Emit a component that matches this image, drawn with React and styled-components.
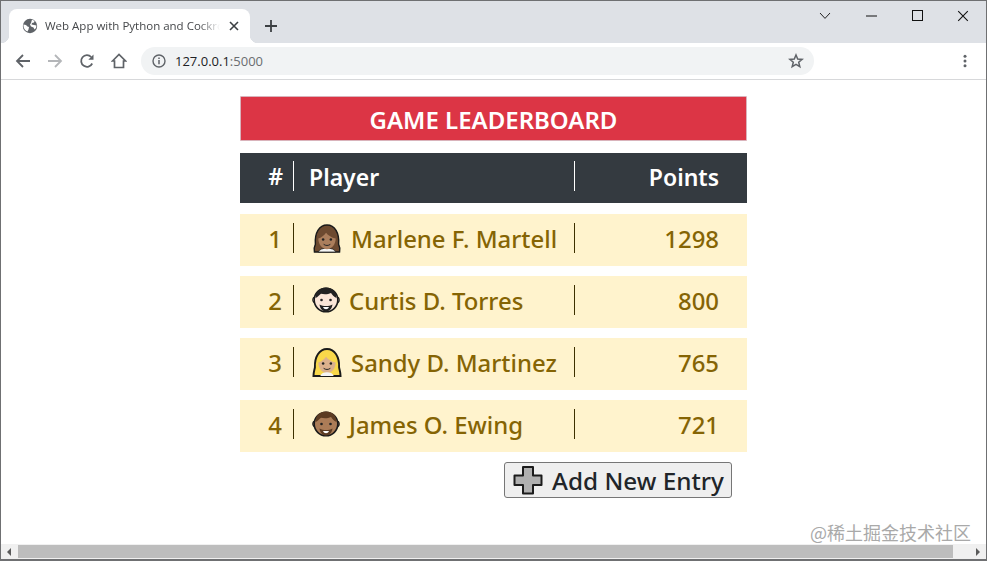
import React from "react"
import styled, { createGlobalStyle } from "styled-components"

const GlobalStyle = createGlobalStyle`
  html, body {
    margin: 0;
    padding: 0;
    height: 100%;
    overflow: hidden;
    background: #fff;
  }
  #root {
    height: 100%;
  }
`

const players = [
  { rank: 1, name: "Marlene F. Martell", points: 1298, face: "woman" },
  { rank: 2, name: "Curtis D. Torres", points: 800, face: "man" },
  { rank: 3, name: "Sandy D. Martinez", points: 765, face: "blonde" },
  { rank: 4, name: "James O. Ewing", points: 721, face: "beard" },
]

const Globe = () => (
  <svg width="16" height="16" viewBox="0 0 16 16">
    <circle cx="8" cy="8" r="7.2" fill="#5f6368" />
    <path d="M1.500 6.500l2.500.5 1.500 1.500 1.500.5-.5 2.500-1 2C3.500 13 1.500 10.500 1.500 8zM10 1.500l2.500 1.500-.5 1.500-2 .5-.5 1.500 2.500.5 2.500.5-.5 2.500-1.500 1.500-1-2-2.500-1-1-2 1-1.500z" fill="#fff" />
  </svg>
)

const Arrow = ({ color, flip }) => (
  <svg width="16" height="16" viewBox="0 0 16 16" style={flip ? { transform: "scaleX(-1)" } : undefined}>
    <path d="M15 8H2M8 2 2 8l6 6" fill="none" stroke={color} strokeWidth="1.8" />
  </svg>
)

const Reload = () => (
  <svg width="16" height="16" viewBox="0 0 16 16">
    <path d="M13.200 10.500A5.800 5.800 0 1 1 12.200 4" fill="none" stroke="#5f6368" strokeWidth="1.800" />
    <path d="M14.500 1.500v5.200H9.300z" fill="#5f6368" />
  </svg>
)

const HomeIcon = () => (
  <svg width="16" height="16" viewBox="0 0 16 16">
    <path d="M1.500 8 8 1.500 14.500 8H12.500V14.500H3.500V8z" fill="none" stroke="#5f6368" strokeWidth="1.700" />
  </svg>
)

const InfoIcon = () => (
  <svg width="14" height="14" viewBox="0 0 14 14">
    <circle cx="7" cy="7" r="6" fill="none" stroke="#5f6368" strokeWidth="1.400" />
    <path d="M7 6v4.200M7 3.600v1.400" stroke="#5f6368" strokeWidth="1.500" />
  </svg>
)

const StarIcon = () => (
  <svg width="16" height="16" viewBox="0 0 16 16">
    <path d="M8 2l1.700 4.100 4.400.3-3.400 2.900 1.100 4.300L8 11.300l-3.800 2.300 1.100-4.300-3.400-2.900 4.400-.3z" fill="none" stroke="#5f6368" strokeWidth="1.500" />
  </svg>
)

const Dots = () => (
  <svg width="4" height="14" viewBox="0 0 4 14">
    <circle cx="2" cy="2.200" r="1.500" fill="#5f6368" />
    <circle cx="2" cy="7" r="1.500" fill="#5f6368" />
    <circle cx="2" cy="11.800" r="1.500" fill="#5f6368" />
  </svg>
)

const Cross = ({ size, color, width }) => (
  <svg width={size} height={size} viewBox="0 0 10 10">
    <path d="M1 1l8 8M9 1 1 9" stroke={color} strokeWidth={width} fill="none" />
  </svg>
)

const Plus = () => (
  <svg width="12" height="12" viewBox="0 0 12 12">
    <path d="M6 0v12M0 6h12" stroke="#3c4043" strokeWidth="1.800" />
  </svg>
)

const Chevron = () => (
  <svg width="12" height="8" viewBox="0 0 12 8">
    <path d="M1 1l5 5.400L11 1" stroke="#222" strokeWidth="1" fill="none" />
  </svg>
)

const Minimize = () => (
  <svg width="11" height="2" viewBox="0 0 11 2">
    <path d="M0 1h11" stroke="#111" strokeWidth="1" />
  </svg>
)

const Maximize = () => (
  <svg width="11" height="11" viewBox="0 0 11 11">
    <rect x=".5" y=".5" width="10" height="10" stroke="#111" fill="none" />
  </svg>
)

const AddIcon = () => (
  <svg width="30" height="30" viewBox="0 0 30 30">
    <path d="M10 2h10v8.500h8.500v9.500H20v8.500H10V20H1.500v-9.500H10z" fill="#b0b0b0" stroke="#1c1c1c" strokeWidth="2" strokeLinejoin="round" />
  </svg>
)

const Face = ({ type }) => {
  const outline = "#1a1a1a"
  if (type === "woman") {
    return (
      <svg width="30" height="29" viewBox="1.500 0 29 30">
        <path d="M3 29c-1-4 0-6 1-8C3 9 8 1 16 1s13 8 12 20c1 2 2 4 1 8z" fill="#6d4a30" stroke={outline} strokeWidth="1.500" />
        <path d="M7 29c1-3 5-4 9-4s8 1 9 4z" fill="#f5f5f5" stroke={outline} strokeWidth=".8" />
        <path d="M7 15c3-1 6-3 8-6 2 3 6 5 10 6 0 6-4 11-9 11S7 21 7 15z" fill="#ab7e5c" />
        <circle cx="12" cy="16" r="1.300" fill="#222" />
        <circle cx="20" cy="16" r="1.300" fill="#222" />
        <path d="M12.500 21c2 1.600 5 1.600 7 0" stroke="#222" strokeWidth="1" fill="none" />
      </svg>
    )
  }
  if (type === "blonde") {
    return (
      <svg width="30" height="29" viewBox="1 0 30 30">
        <path d="M2 29c0-4 1-6 1.500-9C3 9 8 1 16 1s13 8 12.500 19c.5 3 1.500 5 1.500 9z" fill="#f9d84a" stroke={outline} strokeWidth="2" />
        <path d="M7 15c3-1 6-3 8-6 2 3 6 5 10 6 0 6-4 11-9 11S7 21 7 15z" fill="#dbb18d" />
        <path d="M9 29c1-3 4-4 7-4s6 1 7 4z" fill="#f5f5f5" />
        <circle cx="12" cy="16" r="1.300" fill="#222" />
        <circle cx="20" cy="16" r="1.300" fill="#222" />
        <path d="M12.500 21c2 1.600 5 1.600 7 0" stroke="#222" strokeWidth="1" fill="none" />
      </svg>
    )
  }
  const skin = type === "man" ? "#fbe6d8" : "#ab7c57"
  const hair = type === "man" ? "#222" : "#5c3b22"
  return (
    <svg width="28" height="28" viewBox="0 0 28 28">
      <circle cx="3.600" cy="14" r="2.800" fill={skin} stroke={outline} strokeWidth="1.200" />
      <circle cx="24.400" cy="14" r="2.800" fill={skin} stroke={outline} strokeWidth="1.200" />
      <circle cx="14" cy="14" r="11.800" fill={skin} stroke={outline} strokeWidth="1.600" />
      <path d="M3.500 12C3.500 5 8 1.500 14 1.500S24.500 5 24.500 12c-2.500-1-4.500-3.500-5.500-5-3 1.500-7 1.500-10 .8C7.500 9 5.500 11.500 3.500 12z" fill={hair} />
      <path d="M7.500 18.500c2 1.500 4 1.500 6.500 1.500s4.500 0 6.500-1.500c-.5 4.500-3.500 7-6.500 7s-6-2.500-6.500-7z" fill={hair} />
      <path d="M11 21h6c-.6 1.600-1.800 2.200-3 2.200s-2.400-.6-3-2.200z" fill="#fff" />
      <circle cx="9.500" cy="14" r="1.300" fill="#222" />
      <circle cx="18.500" cy="14" r="1.300" fill="#222" />
    </svg>
  )
}

const App = () => {
  return (
    <>
      <GlobalStyle />
      <Window>
        <TabStrip>
          <Tab>
            <Globe />
            <TabTitle>Web App with Python and CockroachDB</TabTitle>
            <TabClose>
              <Cross size={10} color="#3c4043" width={1.6} />
            </TabClose>
          </Tab>
          <NewTab>
            <Plus />
          </NewTab>
          <WindowControls>
            <ControlButton>
              <Chevron />
            </ControlButton>
            <ControlButton>
              <Minimize />
            </ControlButton>
            <ControlButton>
              <Maximize />
            </ControlButton>
            <ControlButton>
              <Cross size={12} color="#111" width={0.9} />
            </ControlButton>
          </WindowControls>
        </TabStrip>
        <Toolbar>
          <NavButton>
            <Arrow color="#5f6368" />
          </NavButton>
          <NavButton>
            <Arrow color="#b4b6b9" flip />
          </NavButton>
          <NavButton>
            <Reload />
          </NavButton>
          <NavButton>
            <HomeIcon />
          </NavButton>
          <AddressBar>
            <InfoIcon />
            <Url>
              127.0.0.1<UrlPort>:5000</UrlPort>
            </Url>
            <StarSlot>
              <StarIcon />
            </StarSlot>
          </AddressBar>
          <MenuSlot>
            <Dots />
          </MenuSlot>
        </Toolbar>
        <Page>
          <Board>
            <Heading>GAME LEADERBOARD</Heading>
            <HeaderRow>
              <RankCell $pad={10}>#</RankCell>
              <PlayerCell $divider="#fff" $pad={15}>
                <HeadName>Player</HeadName>
              </PlayerCell>
              <PointsCell $divider="#fff">Points</PointsCell>
            </HeaderRow>
            {players.map((p) => (
              <Row key={p.rank}>
                <RankCell $pad={11}>{p.rank}</RankCell>
                <PlayerCell $divider="#3d3000" $pad={18}>
                  <FaceSlot>
                    <Face type={p.face} />
                  </FaceSlot>
                  <Name>{p.name}</Name>
                </PlayerCell>
                <PointsCell $divider="#3d3000">{p.points}</PointsCell>
              </Row>
            ))}
            <ButtonRow>
              <AddButton>
                <AddIcon />
                Add New Entry
              </AddButton>
            </ButtonRow>
          </Board>
          <Watermark>@稀土掘金技术社区</Watermark>
        </Page>
        <ScrollBar>
          <ScrollArrow $left />
          <ScrollThumb />
          <ScrollArrow />
        </ScrollBar>
      </Window>
    </>
  )
}

export default App

const Window = styled.div`
  box-sizing: border-box;
  width: 987px;
  height: 561px;
  display: flex;
  flex-direction: column;
  border: 1px solid #6f7072;
  border-bottom-width: 2px;
  overflow: hidden;
  font-family: "Noto Sans", "Open Sans", sans-serif;
`

const TabStrip = styled.div`
  flex: 0 0 42px;
  display: flex;
  align-items: flex-end;
  background: #dee1e6;
  padding-left: 8px;
`

const Tab = styled.div`
  position: relative;
  box-sizing: border-box;
  width: 241px;
  height: 34px;
  display: flex;
  align-items: center;
  padding: 0 11px 0 13px;
  background: #fff;
  border-radius: 8px 8px 0 0;

  &::before,
  &::after {
    content: "";
    position: absolute;
    bottom: 0;
    width: 8px;
    height: 8px;
  }
  &::before {
    left: -8px;
    background: radial-gradient(circle at 0 0, #dee1e6 8px, #fff 8.5px);
  }
  &::after {
    right: -8px;
    background: radial-gradient(circle at 100% 0, #dee1e6 8px, #fff 8.5px);
  }
`

const TabTitle = styled.span`
  flex: 1;
  margin: -2px 0 0 7px;
  font-family: "Open Sans", "Noto Sans", sans-serif;
  font-size: 11.5px;
  color: #45474a;
  white-space: nowrap;
  overflow: hidden;
  -webkit-mask-image: linear-gradient(to right, #000 88%, transparent 100%);
  mask-image: linear-gradient(to right, #000 88%, transparent 100%);
`

const TabClose = styled.span`
  display: flex;
  margin-left: 9px;
`

const NewTab = styled.span`
  display: flex;
  align-self: center;
  margin: 8px 0 0 15px;
`

const WindowControls = styled.div`
  display: flex;
  align-self: flex-start;
  margin-left: auto;
`

const ControlButton = styled.span`
  width: 46px;
  height: 29px;
  display: flex;
  align-items: center;
  justify-content: center;
`

const Toolbar = styled.div`
  box-sizing: border-box;
  flex: 0 0 37px;
  display: flex;
  align-items: center;
  background: #fff;
  border-bottom: 1px solid #d7d8da;
  padding: 0 0 1px 6px;
`

const NavButton = styled.span`
  width: 32px;
  display: flex;
  justify-content: center;
`

const AddressBar = styled.div`
  box-sizing: border-box;
  width: 673px;
  height: 28px;
  margin-left: 6px;
  display: flex;
  align-items: center;
  padding: 0 10px 0 11px;
  background: #f1f3f4;
  border-radius: 14px;
`

const Url = styled.span`
  margin-left: 9px;
  font-family: "Open Sans", "Noto Sans", sans-serif;
  font-size: 13px;
  color: #202124;
`

const UrlPort = styled.span`
  color: #6a6d70;
`

const StarSlot = styled.span`
  display: flex;
  margin-left: auto;
`

const MenuSlot = styled.span`
  display: flex;
  margin-left: 149px;
`

const Page = styled.main`
  position: relative;
  flex: 1;
  display: flex;
  justify-content: center;
  background: #fff;
`

const Board = styled.div`
  width: 507px;
  margin: 16px 0 0 0;
  display: flex;
  flex-direction: column;
`

const Heading = styled.div`
  box-sizing: border-box;
  height: 45px;
  padding-top: 2px;
  display: flex;
  align-items: center;
  justify-content: center;
  background: #dc3545;
  border: 1px solid #d9b3bb;
  border-radius: 1px;
  color: #fff;
  font-size: 24px;
  font-weight: 600;
`

const HeaderRow = styled.div`
  box-sizing: border-box;
  height: 50px;
  margin-top: 12px;
  padding-top: 8px;
  display: grid;
  grid-template-columns: 53px 281px 173px;
  align-items: start;
  background: #343a40;
  color: #fff;
  font-size: 23px;
  font-weight: 600;
`

const Row = styled.div`
  box-sizing: border-box;
  height: 52px;
  margin-top: 10px;
  padding-top: 9px;
  display: grid;
  grid-template-columns: 53px 281px 173px;
  align-items: start;
  background: #fff3cd;
  color: #856404;
  font-size: 23.9px;
  font-weight: 500;

  ${HeaderRow} + & {
    margin-top: 11px;
  }
`

const RankCell = styled.div`
  height: 30px;
  line-height: 31px;
  text-align: right;
  padding-right: ${(p) => p.$pad}px;
`

const PlayerCell = styled.div`
  height: 30px;
  display: flex;
  align-items: center;
  padding-left: ${(p) => p.$pad}px;
  border-left: 1px solid ${(p) => p.$divider};
  white-space: nowrap;
`

const Name = styled.span`
  padding-top: 0;
`

const HeadName = styled.span`
  padding-top: 2px;
`

const PointsCell = styled.div`
  box-sizing: border-box;
  height: 30px;
  display: flex;
  align-items: center;
  justify-content: flex-end;
  padding: 1px 28px 0 0;
  border-left: 1px solid ${(p) => p.$divider};
`

const FaceSlot = styled.span`
  display: flex;
  margin-right: 9px;
`

const ButtonRow = styled.div`
  display: flex;
  justify-content: flex-end;
  margin-top: 10px;
  padding-right: 15px;
`

const AddButton = styled.button`
  box-sizing: border-box;
  width: 228px;
  height: 36px;
  display: flex;
  align-items: center;
  justify-content: center;
  gap: 9px;
  padding: 0 0 0 1px;
  background: #efefef;
  border: 1px solid #767676;
  border-radius: 3px;
  color: #212529;
  font-family: "Noto Sans", sans-serif;
  font-size: 24.3px;
  font-weight: 500;
`

const Watermark = styled.div`
  position: absolute;
  right: 15px;
  bottom: -1px;
  color: #a9a9a9;
  font-family: "Noto Sans CJK SC", sans-serif;
  font-size: 18px;
  line-height: 26px;
`

const ScrollBar = styled.div`
  flex: 0 0 15px;
  display: flex;
  align-items: center;
  background: #f0f0f0;
`

const ScrollThumb = styled.div`
  width: 937px;
  height: 13px;
  margin: 0 17px 0 1px;
  background: #bdbdbd;
`

const ScrollArrow = styled.span`
  width: 16px;
  display: flex;
  justify-content: center;

  &::before {
    content: "";
    border-style: solid;
    border-width: 4px 0 4px 4px;
    border-color: transparent transparent transparent #5a5a5a;
    transform: ${(p) => (p.$left ? "scaleX(-1)" : "none")};
  }
`
